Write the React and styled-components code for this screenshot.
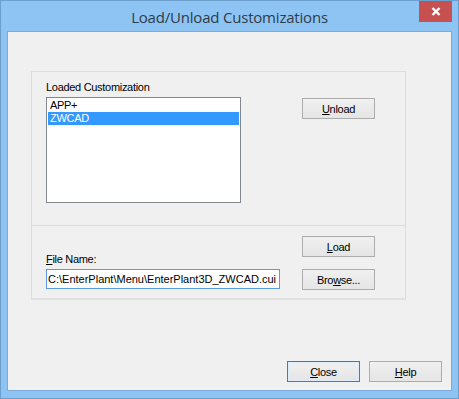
import React from "react";
import styled, { createGlobalStyle } from "styled-components";

const GlobalStyle = createGlobalStyle`
  html, body {
    margin: 0;
    padding: 0;
    background: #ffffff;
  }
  * {
    box-sizing: border-box;
  }
`;

const Window = styled.div`
  width: 459px;
  height: 399px;
  display: flex;
  flex-direction: column;
  background: #8ec4f3;
  border: 1px solid #6c9fcc;
  padding: 0 6px 7px 6px;
  font-family: "Liberation Sans", Arial, sans-serif;
  font-size: 11px;
  letter-spacing: -0.3px;
  color: #000;
`;

const TitleBar = styled.div`
  height: 30px;
  display: grid;
  grid-template-columns: 1fr auto 1fr;
  align-items: start;
`;

const Title = styled.div`
  grid-column: 2;
  padding-top: 6px;
  font-family: "Open Sans", "Noto Sans", sans-serif;
  font-size: 15px;
  letter-spacing: -0.2px;
  line-height: 20px;
  color: #2f3b47;
`;

const CloseX = styled.div`
  grid-column: 3;
  justify-self: end;
  width: 33px;
  height: 21px;
  background: #c75050;
  display: flex;
  align-items: center;
  justify-content: center;
`;

const Client = styled.div`
  flex: 1;
  display: flex;
  flex-direction: column;
  background: #f0f0f0;
  border: 1px solid #7aabdb;
`;

const Panels = styled.div`
  width: 375px;
  margin: 39px 0 0 23px;
`;

const Panel = styled.div`
  display: flex;
  gap: ${(p) => p.$gap}px;
  height: ${(p) => p.$h}px;
  padding: ${(p) => p.$pad};
  border: 1px solid #dcdcdc;
  border-bottom: ${(p) => (p.$last ? "2px solid #e0e0e0" : "none")};
`;

const Column = styled.div`
  display: flex;
  flex-direction: column;
  gap: ${(p) => p.$gap || 0}px;
  justify-content: ${(p) => (p.$end ? "flex-end" : "flex-start")};
  padding-top: ${(p) => p.$top || 0}px;
`;

const Label = styled.div`
  line-height: 13px;
  margin-bottom: 3px;
`;

const ListBox = styled.div`
  width: 195px;
  height: 106px;
  border: 1px solid #828790;
  background: #fff;
  padding: 1px;
`;

const ListItem = styled.div`
  height: 13px;
  line-height: 13px;
  padding-left: 2px;
  background: ${(p) => (p.$selected ? "#3399ff" : "transparent")};
  color: ${(p) => (p.$selected ? "#fff" : "#000")};
`;

const TextBox = styled.div`
  width: 234px;
  height: 20px;
  margin-bottom: 1px;
  border: 1px solid #569de5;
  background: #fff;
  line-height: 18px;
  padding-left: 1px;
  letter-spacing: 0;
  white-space: nowrap;
  overflow: hidden;
`;

const Button = styled.div`
  width: 73px;
  height: 21px;
  display: flex;
  align-items: center;
  justify-content: center;
  background: linear-gradient(#f0f0f0, #e5e5e5);
  border: 1px solid ${(p) => (p.$default ? "#3c7fb1" : "#acacac")};
  box-shadow: ${(p) => (p.$default ? "inset 0 0 0 1px #dcecfc" : "none")};
  color: #000;
`;

const Footer = styled.div`
  margin-top: auto;
  display: flex;
  justify-content: flex-end;
  gap: 9px;
  padding: 0 9px 8px 0;
`;

const Key = ({ children }) => <u>{children}</u>;

export default function App() {
  return (
    <>
      <GlobalStyle />
      <Window>
        <TitleBar>
          <Title>Load/Unload Customizations</Title>
          <CloseX>
            <svg width="10" height="9" viewBox="0 0 10 9">
              <path d="M1.5 1 L8.5 8 M8.5 1 L1.5 8" stroke="#fff" strokeWidth="2.4" />
            </svg>
          </CloseX>
        </TitleBar>
        <Client>
          <Panels>
            <Panel $gap={61} $h={154} $pad="9px 0 0 14px">
              <Column>
                <Label>Loaded Customization</Label>
                <ListBox>
                  <ListItem>APP+</ListItem>
                  <ListItem $selected>ZWCAD</ListItem>
                </ListBox>
              </Column>
              <Column $top={17}>
                <Button>
                  <span>
                    <Key>U</Key>nload
                  </span>
                </Button>
              </Column>
            </Panel>
            <Panel $gap={22} $h={75} $pad="10px 0 8px 14px" $last>
              <Column $end>
                <Label>
                  <Key>F</Key>ile Name:
                </Label>
                <TextBox>C:\EnterPlant\Menu\EnterPlant3D_ZWCAD.cui</TextBox>
              </Column>
              <Column $gap={12}>
                <Button>
                  <span>
                    <Key>L</Key>oad
                  </span>
                </Button>
                <Button>
                  <span>
                    Bro<Key>w</Key>se...
                  </span>
                </Button>
              </Column>
            </Panel>
          </Panels>
          <Footer>
            <Button $default>
              <span>
                <Key>C</Key>lose
              </span>
            </Button>
            <Button>
              <span>
                <Key>H</Key>elp
              </span>
            </Button>
          </Footer>
        </Client>
      </Window>
    </>
  );
}
